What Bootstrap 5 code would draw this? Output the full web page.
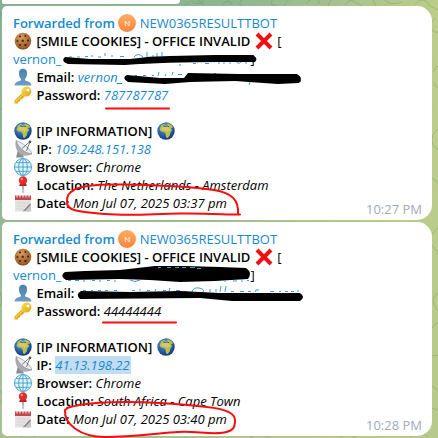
<!DOCTYPE html>
<html lang="en">
<head>
<meta charset="utf-8">
<meta name="viewport" content="width=device-width, initial-scale=1">
<title>Chat</title>
<link href="https://cdn.jsdelivr.net/npm/bootstrap@5.3.0/dist/css/bootstrap.min.css" rel="stylesheet">
<style>
body{font-family:"Open Sans","Noto Sans",sans-serif;font-size:13px;line-height:18px;color:#000;min-height:100vh;background:linear-gradient(100deg,#84b094 0%,#8db692 45%,#bccd8a 85%,#c2d08b 100%)}
.chat{position:relative;z-index:0;overflow:hidden;min-height:100vh;gap:2px;padding:0 6px 2px 2px;background:linear-gradient(180deg,rgba(170,196,142,0) 0%,rgba(178,200,142,.75) 100%)}
.doodles{position:absolute;inset:0;width:100%;height:100%;z-index:-1}
.previous{width:178px;height:4px;background:#fff;border-radius:0 0 14px 5px}
.bubble{background:#fff;border-radius:5px 15px 15px 5px;padding:8px 10px 8px 11px}
.line{height:18px;white-space:pre}
.line b,.from{font-weight:600}
.sender{font-weight:500}
.from,.bubble a{color:#168acd;text-decoration:none}
.emo{width:18px;height:18px;margin:0 1px;vertical-align:top;overflow:visible}
.avatar{display:inline-block;width:18px;height:18px;border-radius:50%;background:linear-gradient(#ffad62,#f98440);color:#fff;font-size:8px;font-weight:400;text-align:center;vertical-align:top}
.hid-name{display:inline-block;width:189px}
.stamp{color:#a0acb6;margin-bottom:-6px}
.picked{background:#c2dcf2;display:inline-block;height:18px;padding:0 1px 0 0;vertical-align:top}
.pen{position:absolute;left:0;top:0;overflow:visible;pointer-events:none}
.pen .red{fill:none;stroke:#f80c0c;stroke-width:2;stroke-linecap:round;stroke-linejoin:round}
.pen .peek{fill:none;stroke:#3d9dd6;stroke-width:1}
</style>
<script src="https://cdn.jsdelivr.net/npm/bootstrap@5.3.0/dist/js/bootstrap.bundle.min.js"></script>
</head>
<body>
<svg width="0" height="0" class="position-absolute" aria-hidden="true">
<defs>
<radialGradient id="gCookie" cx=".4" cy=".3"><stop offset="0" stop-color="#d9a066"/><stop offset="1" stop-color="#a8662f"/></radialGradient>
<radialGradient id="gSea" cx=".4" cy=".3" r=".7"><stop offset="0" stop-color="#5b9be6"/><stop offset="1" stop-color="#123a83"/></radialGradient>
<linearGradient id="gMan" x2="0" y2="1"><stop offset="0" stop-color="#4a7fa5"/><stop offset="1" stop-color="#6f9fc3"/></linearGradient>
<linearGradient id="gKey" x2="1" y2="1"><stop offset="0" stop-color="#ffe14d"/><stop offset="1" stop-color="#e0a010"/></linearGradient>
</defs>
<symbol id="cookie" viewBox="0 0 18 18"><circle cx="9" cy="9" r="8.3" fill="url(#gCookie)"/><path d="M2 13Q9 20 16.5 12Q14 17.5 9 17.5T2 13" fill="#865022"/><g fill="#4a2615"><circle cx="6" cy="4.5" r="1.1"/><circle cx="11.5" cy="4" r="1"/><circle cx="3.5" cy="9" r="1"/><circle cx="8.7" cy="8.7" r="1.2"/><circle cx="14" cy="8.5" r="1.1"/><circle cx="6" cy="13" r="1.1"/><circle cx="11.5" cy="13" r="1.2"/></g></symbol>
<symbol id="person" viewBox="0 0 18 18"><path d="M9 .7C5.8.7 4.7 3 5 6c.1 2.5 1 4 2 5v1.4C4 13.3 1 13.6.5 17.5h17c-.5-3.9-3.5-4.2-6.5-5.100V11c1-1 1.900-2.500 2-5 .3-3-.8-5.300-4-5.300Z" fill="url(#gMan)"/></symbol>
<symbol id="key" viewBox="0 0 18 18"><path d="M8.200 7 .5 14.500v3h3.300l.4-1.800 1.600-.3.500-1.800 1.700-.4 2.700-2.800Z" fill="#e5aa1b"/><path d="M9 2.300C11 .200 14 0 16 2s1.900 5-.2 7-5 2.200-7 .3-1.800-5 .2-7Z" fill="url(#gKey)"/><circle cx="14" cy="4" r="1.500" fill="#fff"/><path d="m1.500 15.800 7.500-7.300" stroke="#ffe67a" stroke-width="1"/></symbol>
<symbol id="globe" viewBox="0 0 18 18"><circle cx="9" cy="9" r="8.700" fill="url(#gSea)"/><path d="M4 3.500 6.500 2 9 3l2.500-1.500 3.500 2 1 2-2 .5 1.200 2.500-1.700 1.500-.8 3.500-2 2.500-1.500-.5-.7-4-1.500-1.500-3-.5L2.500 7.500Z" fill="#b8c14c"/><path d="m5 5.500 4-.8 3 1 1 2-2 2-3.500-1.200L4.500 8Z" fill="#d9c768"/><path d="m6 3.600 2 .9 2-.6 2 .8" stroke="#2a61ae" fill="none"/></symbol>
<symbol id="dish" viewBox="0 0 18 18"><path d="M4 10 2 17.500h8L8 12Z" fill="#8b8e91"/><path d="M2 .5C0 6 3 12.500 8 15c4 1.300 7 .4 10-1Z" fill="#aaaeb1"/><path d="M2 .5C8 2.500 16 8 18 14 11 13.500 4 7.500 2 .5Z" fill="#eceded" stroke="#7c8083" stroke-width=".6"/><path d="M8 8.500 16 1.500M12.500 11 16 1.500" stroke="#55595c" stroke-width=".8" fill="none"/><circle cx="16" cy="1.800" r="1.400" fill="#55595c"/></symbol>
<symbol id="web" viewBox="0 0 18 18"><g fill="#e8f6fb" stroke="#45a5cc" stroke-width="1"><circle cx="9" cy="9" r="8.500"/><ellipse cx="9" cy="9" rx="4.300" ry="8.500"/><path d="M9 .7v16.600M.7 9h16.600M2.200 4.700h13.600M2.200 13.300h13.600" fill="none"/></g></symbol>
<symbol id="pin" viewBox="0 0 18 18"><path d="M8.300 9h1.400l-.4 8.300h-.6Z" fill="#777"/><path d="M6.700 6h4.600l1.700 4H5Z" fill="#b7201e"/><circle cx="9" cy="4.500" r="4.200" fill="#dd302d"/><circle cx="7.700" cy="3" r="1.300" fill="#f58a84"/></symbol>
<symbol id="pad" viewBox="0 0 18 18"><path d="M1 2h16v15.500H1Z" fill="#e4e2e3"/><path d="M1 1.500h16V6H1Z" fill="#c4484b"/><path d="M3 .5v3M6 .5v3M9 .5v3M12 .5v3M15 .5v3" stroke="#eee" stroke-width="1"/><path d="M3 9h12M3 12h9M3 15h6" stroke="#d2cfd0" stroke-width=".6"/><path d="M17 11 11.500 16 8 17.500h9Z" fill="#c9c6c7"/><path d="m16.500 10-5.500 6-1.500.5" stroke="#777" stroke-width="1.200" fill="none"/></symbol>
<symbol id="cross" viewBox="0 0 18 18"><path d="m2 2 14 14M16 2 2 16" stroke="#ee1111" stroke-width="4"/></symbol>
</svg>

<main class="chat d-flex flex-column">
<svg class="doodles" aria-hidden="true" fill="none" stroke="#59863f" stroke-opacity=".27" stroke-width="1">
<path d="M190-2q4 9 14 3M222 5q7-8 10 0M272 0q-3 7 5 5M306 4q10-12 14 0M345 5q5-8 11-2l6 3M382-2q9 9 20 4M415 4q9-9 15 2l10 5M436 18q-10 6-2 14l6 0M433 72q4-8 7-5M433 82q6 10 7 2M440 128q-8 4-8 12t8 10M432 178l8 6M432 235q4-8 8-6M432 245q6 9 8 8M440 292q-9 4-6 12t6 5M432 328q5-8 8-3M432 356l8-1M432 386l8 6M432 408q6 4 8-4M0 12l3 8M0 110q5-6 2 10M0 190q4 4 0 12M0 292q4 9 0 14M0 391q6 5 0 12"/>
<path d="M190 2q-8 3-6 6M196-1l8 6M243-2q-6 7-1 8M289-1l-6 8M332-1q-7 9-1 8M372-1l4 7M20 437q8-5 15 0M100 437l6-2M250 437q10-5 20 1M340 437l8-3 8 4M410 437q9-7 18-1"/>
</svg>
<div class="previous"></div>

<article class="bubble position-relative d-flex justify-content-between align-items-end">
<div>
<div class="line from">Forwarded from <span class="avatar">N</span> <span class="sender">NEW0365RESULTTBOT</span></div>
<div class="line"><svg class="emo"><use href="#cookie"/></svg> <b>[SMILE COOKIES] - OFFICE INVALID </b><svg class="emo"><use href="#cross"/></svg> [</div>
<div class="line"><a href="#">vernon_<span class="hid-name"></span></a>]</div>
<div class="line"><svg class="emo"><use href="#person"/></svg> <b>Email:</b> <a href="#"><i>vernon_</i></a></div>
<div class="line"><svg class="emo"><use href="#key"/></svg> <b>Password:</b> <a href="#"><i>787787787</i></a></div>
<div class="line"></div>
<div class="line"><svg class="emo"><use href="#globe"/></svg> <b>[IP INFORMATION] </b><svg class="emo"><use href="#globe"/></svg></div>
<div class="line"><svg class="emo"><use href="#dish"/></svg> <b>IP:</b> <a href="#"><i>109.248.151.138</i></a></div>
<div class="line"><svg class="emo"><use href="#web"/></svg> <b>Browser:</b> <i>Chrome</i></div>
<div class="line"><svg class="emo"><use href="#pin"/></svg> <b>Location:</b> <i>The Netherlands - Amsterdam</i></div>
<div class="line"><svg class="emo"><use href="#pad"/></svg> <b>Date:</b> <i>Mon Jul 07, 2025 03:37 pm</i></div>
</div>
<time class="stamp text-nowrap">10:27 PM</time>
<svg class="pen" width="430" height="214" viewBox="2 6 430 214" aria-hidden="true">
<path class="peek" d="M69 57h3M77 57h3M85 56.500h3M92 57v-2M98 57h3M105 56v-3M112 57v-2M120 56.500h4M134 57q4-5 9 0M147 57v-5M153 57v-2M157 57v-4M162 56v-4M180 64v2M193 63.500h3M205 63.500h4M219 61v3M224 61v3M230 61v3M236 61q2 4 5 1M246 61v3"/>
<path class="peek" d="M135 75.500h2M143 75.500h3M152 75.500h2M158 76l1-4M165 76l1-2M172 75l1-3M178 74.500h4M214 73.500h2M250 82l-1 3M298 81h3"/>
<path d="M65 57 90 59 130 59Q150 56 170 56L215 55 252 55Q259 58 255 62L220 62Q165 62 125 65L68 64Q60 61 65 57Z"/>
<path d="M127 75 160 78 184 78 188 73 240 74 297 74Q304 78 299 83L278 84 235 81 190 82 165 84 128 82Q121 78 127 75Z"/>
<path class="red" d="M106 108.500H169"/>
<path class="red" d="M73 190C82 185 102 184 125 184.500S180 185 214 190C232 193 239 200 238 214M240 214.500C230 215 210 213 180 213.500S130 216 105 214 66 211 67 202C67 196 68 193 74 190"/>
</svg>
</article>

<article class="bubble position-relative d-flex justify-content-between align-items-end">
<div>
<div class="line from">Forwarded from <span class="avatar">N</span> <span class="sender">NEW0365RESULTTBOT</span></div>
<div class="line"><svg class="emo"><use href="#cookie"/></svg> <b>[SMILE COOKIES] - OFFICE INVALID </b><svg class="emo"><use href="#cross"/></svg> [</div>
<div class="line"><a href="#">vernon_<span class="hid-name"></span></a>]</div>
<div class="line"><svg class="emo"><use href="#person"/></svg> <b>Email:</b></div>
<div class="line"><svg class="emo"><use href="#key"/></svg> <b>Password:</b> <i>44444444</i></div>
<div class="line"></div>
<div class="line"><svg class="emo"><use href="#globe"/></svg> <b>[IP INFORMATION] </b><svg class="emo"><use href="#globe"/></svg></div>
<div class="line"><svg class="emo"><use href="#dish"/></svg> <b>IP:</b> <a href="#" class="picked"><i>41.13.198.22</i></a></div>
<div class="line"><svg class="emo"><use href="#web"/></svg> <b>Browser:</b> <i>Chrome</i></div>
<div class="line"><svg class="emo"><use href="#pin"/></svg> <b>Location:</b> <i>South Africa - Cape Town</i></div>
<div class="line"><svg class="emo"><use href="#pad"/></svg> <b>Date:</b> <i>Mon Jul 07, 2025 03:40 pm</i></div>
</div>
<time class="stamp text-nowrap">10:28 PM</time>
<svg class="pen" width="430" height="214" viewBox="2 222 430 214" aria-hidden="true">
<path d="M65 272 85 271 120 270 155 266 185 266 220 267 246 268Q253 273 248 279L215 281 180 282 150 280 120 279 66 280Q59 276 65 272Z"/>
<path class="peek" d="M68 280.500h3M75 280.500h4M84 280v2M92 280.500h3M100 280v2M107 280.500h3M115 280v2M130 280q5 3 10 0M158 267.500h3M167 267.500h4M175 267.500h4M182 267.500h4M190 267.500h5M197 268.500h4M225 280v2M233 281h4M242 279v3M247 280.500h2"/>
<path class="peek" d="M83 290.500h3M91 290.500h2M98 290.500h3M105 290.500h3M114 290.500h3M132 290.500h3M140 291v-2M147 290.500h3M155 291l1-2M163 290.500h3M169 291l1-3M176 290.500h4M184 291.500h3M192 292q1-5 7-4t4 4M210 292v-3M216 292v-3M220 292l1-6M225 292l1-6M231 291.500h3M240 291.500h4M248 291.500h3M255 292l1-2h3M270 291.500h4M279 291.500h2M285 291.500h3M291 291.500h3M298 292v-2"/>
<path d="M81 291 130 292 180 291 220 293 300 293Q306 297 300 301L232 301 200 298 80 299Q75 294 81 291Z"/>
<path class="red" d="M103 322.500H176"/>
<path class="red" d="M67 408C80 404 100 402 125 402S180 404 207 407C226 409 235 413 235 420S234 432 220 433 195 431 178 432 130 437 105 437 64 424 65 410L69 407"/>
</svg>
</article>
</main>
</body>
</html>
